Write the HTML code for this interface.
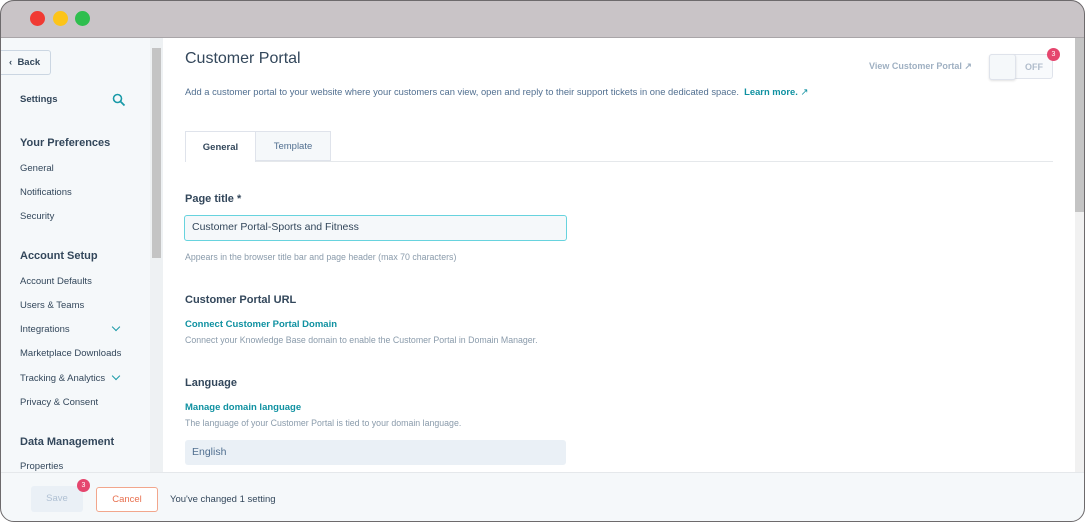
<!DOCTYPE html>
<html><head><meta charset="utf-8"><style>
*{margin:0;padding:0;box-sizing:border-box}
body{width:1085px;height:522px;overflow:hidden;background:#fff;font-family:"Liberation Sans",sans-serif;}
.frame{position:absolute;left:0;top:0;width:1085px;height:522px;border-radius:14px;overflow:hidden;background:#fff}
.bord{position:absolute;left:0;top:0;width:1085px;height:522px;border:1px solid #6d6a6c;border-radius:14px;z-index:10}
.tb{position:absolute;left:0;top:0;width:100%;height:38px;background:#c9c4c7;border-bottom:1px solid #a9a5a8}
.dot{position:absolute;top:11px;width:15px;height:15px;border-radius:50%}
.a{position:absolute;white-space:nowrap}
.side{position:absolute;left:0;top:38px;width:150px;height:434px;background:#f5f8fa}
.sb{position:absolute;left:150px;top:38px;width:13px;height:434px;background:#eef1f3}
.s{font-size:9.5px;color:#33475b;left:20px}
.h{font-size:11px;font-weight:bold;color:#33475b;left:20px}
.chev{position:absolute;left:113px;width:6px;height:6px;border-right:1.6px solid #1a9aa8;border-bottom:1.6px solid #1a9aa8;transform:rotate(45deg)}
.lbl{font-size:11px;font-weight:bold;color:#33475b;left:185px}
.help{font-size:8.8px;color:#8a9bab;left:185px}
.lnk{font-size:9.5px;font-weight:bold;color:#0f91a1;left:185px}
</style></head><body><div class="frame">
<div class="tb"></div>
<div class="dot" style="left:30px;background:#f03a33"></div>
<div class="dot" style="left:53px;background:#fcc419"></div>
<div class="dot" style="left:75px;background:#2fbe4e"></div>

<div class="side"></div>
<div class="sb"><div style="position:absolute;left:2px;top:10px;width:9px;height:210px;background:#c4c4c4"></div></div>
<div class="a" style="left:0;top:50px;width:51px;height:25px;border:1px solid #cbd6e2;border-left:none;border-radius:0 3px 3px 0;background:#f5f8fa;font-size:9.5px;font-weight:bold;color:#33475b;line-height:23px;padding-left:9px">‹&nbsp; Back</div>
<div class="a s" style="top:94px;font-weight:bold">Settings</div>
<svg class="a" style="left:112px;top:93px" width="14" height="14" viewBox="0 0 14 14"><circle cx="5.5" cy="5.5" r="4" fill="none" stroke="#1a9aa8" stroke-width="1.6"/><path d="M8.5 8.5L12.5 12.5" stroke="#1a9aa8" stroke-width="1.8"/></svg>
<div class="a h" style="top:137px">Your Preferences</div>
<div class="a s" style="top:163px">General</div>
<div class="a s" style="top:187px">Notifications</div>
<div class="a s" style="top:211px">Security</div>
<div class="a h" style="top:250px">Account Setup</div>
<div class="a s" style="top:276px">Account Defaults</div>
<div class="a s" style="top:300px">Users &amp; Teams</div>
<div class="a s" style="top:324px">Integrations</div><div class="chev" style="top:324px"></div>
<div class="a s" style="top:348px">Marketplace Downloads</div>
<div class="a s" style="top:373px">Tracking &amp; Analytics</div><div class="chev" style="top:373px"></div>
<div class="a s" style="top:397px">Privacy &amp; Consent</div>
<div class="a h" style="top:436px">Data Management</div>
<div class="a s" style="top:461px">Properties</div>

<div class="a" style="left:185px;top:50px;font-size:16px;color:#33475b">Customer Portal</div>
<div class="a" style="left:185px;top:86px;font-size:9.4px;color:#516f90">Add a customer portal to your website where your customers can view, open and reply to their support tickets in one dedicated space.&nbsp; <b style="color:#0f91a1">Learn more.</b> <span style="color:#0f91a1">↗</span></div>
<div class="a" style="left:869px;top:61px;font-size:9px;font-weight:bold;color:#9fb0c2">View Customer Portal ↗</div>
<div class="a" style="left:989px;top:54px;width:64px;height:25px;border:1px solid #dfe3eb;border-radius:3px;background:#f8fafc"></div>
<div class="a" style="left:989px;top:54px;width:27px;height:26px;border:1px solid #dfe3eb;border-radius:3px;background:#f5f8fa;box-shadow:0 1px 2px rgba(0,0,0,.12)"></div>
<div class="a" style="left:1025px;top:62px;font-size:9px;font-weight:bold;color:#b0bccb">OFF</div>
<div class="a" style="left:1047px;top:48px;width:13px;height:13px;border-radius:50%;background:#e5466e;color:#fff;font-size:7px;text-align:center;line-height:13px">3</div>

<div class="a" style="left:185px;top:161px;width:868px;height:1px;background:#e5e8eb"></div>
<div class="a" style="left:185px;top:131px;width:71px;height:31px;border:1px solid #dfe3eb;border-bottom:none;background:#fff;font-size:9.5px;font-weight:bold;color:#33475b;text-align:center;line-height:31px">General</div>
<div class="a" style="left:256px;top:131px;width:75px;height:30px;border:1px solid #dfe3eb;border-left:none;background:#f5f8fa;font-size:9.5px;color:#516f90;text-align:center;line-height:30px">Template</div>

<div class="a lbl" style="top:193px">Page title *</div>
<div class="a" style="left:184px;top:215px;width:383px;height:26px;border:1.5px solid #67d3de;border-radius:3px;background:#f5f8fa;font-size:10.5px;color:#33475b;line-height:23px;padding-left:7px">Customer Portal-Sports and Fitness</div>
<div class="a help" style="top:252px">Appears in the browser title bar and page header (max 70 characters)</div>
<div class="a lbl" style="top:294px">Customer Portal URL</div>
<div class="a lnk" style="top:319px">Connect Customer Portal Domain</div>
<div class="a help" style="top:335px">Connect your Knowledge Base domain to enable the Customer Portal in Domain Manager.</div>
<div class="a lbl" style="top:377px">Language</div>
<div class="a lnk" style="top:402px">Manage domain language</div>
<div class="a help" style="top:418px">The language of your Customer Portal is tied to your domain language.</div>
<div class="a" style="left:185px;top:440px;width:381px;height:25px;border-radius:3px;background:#eaf0f6;font-size:10.5px;color:#516f90;line-height:25px;padding-left:7px">English</div>

<div class="a" style="left:1075px;top:38px;width:10px;height:434px;background:#f1f1f1"><div style="height:174px;background:#c4c4c4"></div></div>

<div class="a" style="left:0;top:472px;width:1085px;height:50px;background:#f5f8fa;border-top:1px solid #e5e8eb"></div>
<div class="a" style="left:31px;top:486px;width:52px;height:26px;border-radius:3px;background:#eaf0f6;font-size:9.5px;color:#b0c1d4;text-align:center;line-height:26px">Save</div>
<div class="a" style="left:77px;top:479px;width:13px;height:13px;border-radius:50%;background:#e5466e;color:#fff;font-size:7px;text-align:center;line-height:13px">3</div>
<div class="a" style="left:96px;top:487px;width:62px;height:25px;border:1px solid #f2a68c;border-radius:3px;background:#fff;font-size:9.5px;color:#e8704f;text-align:center;line-height:23px">Cancel</div>
<div class="a" style="left:170px;top:494px;font-size:9.5px;color:#33475b">You've changed 1 setting</div>
</div><div class="bord"></div></body></html>
